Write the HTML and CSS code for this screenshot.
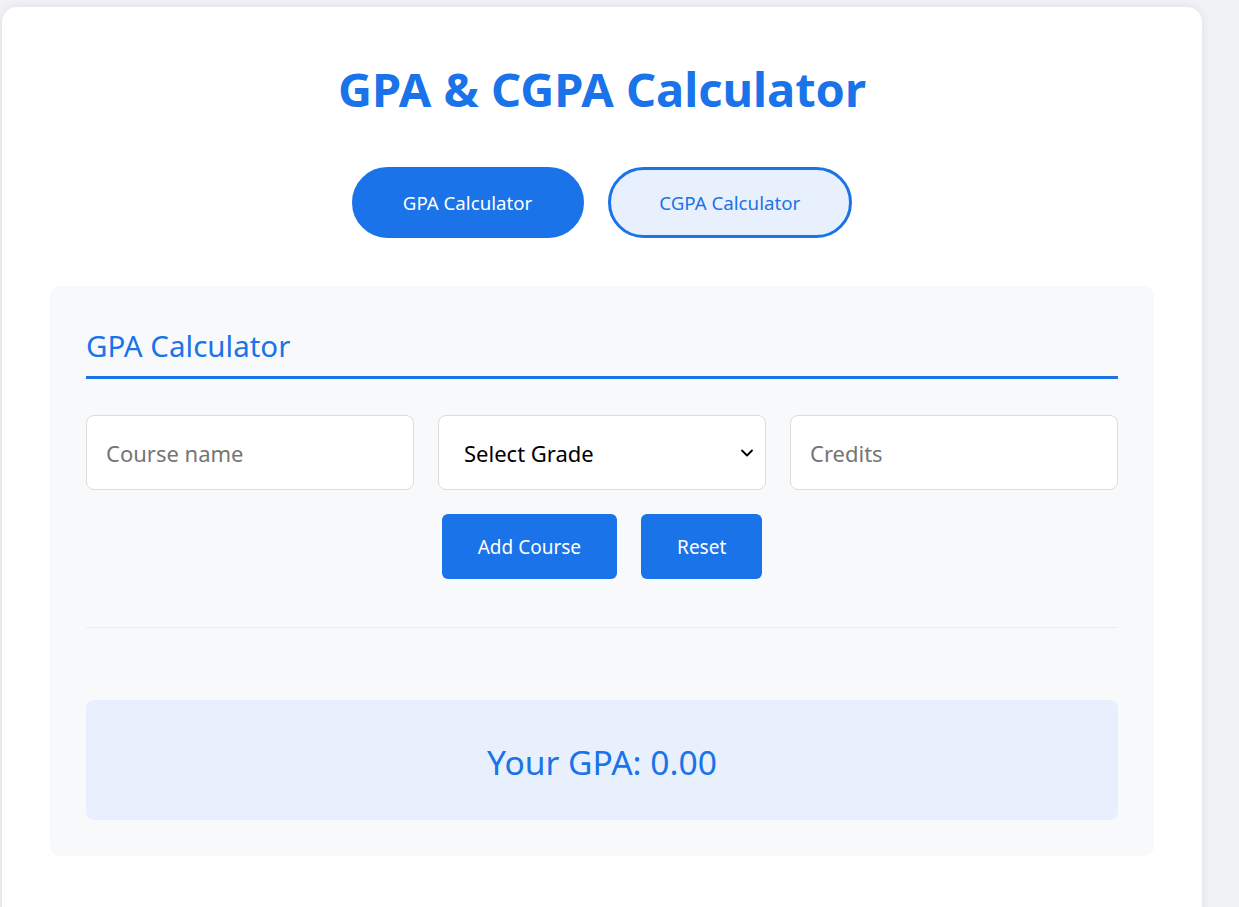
FILE: index.html
```html
<!DOCTYPE html>
<html lang="en">
<head>
<meta charset="utf-8">
<title>GPA &amp; CGPA Calculator</title>
<link rel="stylesheet" href="styles.css">
</head>
<body>
<div class="card">
  <h1 class="title">GPA &amp; CGPA Calculator</h1>
  <div class="tabs">
    <button class="tab active">GPA Calculator</button>
    <button class="tab">CGPA Calculator</button>
  </div>
  <section class="panel">
    <h2 class="panel-title">GPA Calculator</h2>
    <div class="fields">
      <input class="field" type="text" placeholder="Course name">
      <div class="select-wrap">
        <select class="field select">
          <option>Select Grade</option>
        </select>
        <svg class="chevron" width="14" height="10" viewBox="0 0 14 10"><path d="M2 2.5 L7 7.5 L12 2.5" fill="none" stroke="#000" stroke-width="1.8" stroke-linecap="round" stroke-linejoin="round"/></svg>
      </div>
      <input class="field" type="text" placeholder="Credits">
    </div>
    <div class="actions">
      <button class="btn">Add Course</button>
      <button class="btn">Reset</button>
    </div>
    <hr class="divider">
    <div class="result">Your GPA: 0.00</div>
  </section>
</div>
</body>
</html>
```

FILE: styles.css
```css
* { box-sizing: border-box; }
html, body { margin: 0; }
body {
  background: #f0f2f5;
  font-family: "Noto Sans", "Open Sans", sans-serif;
  padding: 7px 37px 0 2px;
  min-height: 907px;
}
.card {
  width: 1200px;
  background: #fff;
  border-radius: 15px;
  box-shadow: 0 0 10px rgba(0, 0, 0, 0.08);
  padding: 58px 48px 60px;
  min-height: 960px;
}
.title {
  margin: 0;
  text-align: center;
  color: #1a73e8;
  font-size: 47px;
  line-height: 48px;
  font-weight: 700;
}
.tabs {
  display: flex;
  justify-content: center;
  gap: 24px;
  margin-top: 54px;
}
.tab {
  font-family: inherit;
  font-size: 18.7px;
  line-height: 25px;
  padding: 20px 49px 20px 48px;
  border: 3px solid #1a73e8;
  border-radius: 40px;
  background: #e8f0fe;
  color: #1a73e8;
}
.tab.active {
  background: #1a73e8;
  color: #fff;
}
.panel {
  margin-top: 48px;
  background: #f8f9fa;
  border-radius: 10px;
  padding: 39px 36px 36px;
}
.panel-title {
  margin: 0;
  font-weight: 400;
  color: #1a73e8;
  font-size: 29.5px;
  line-height: 41px;
  padding-bottom: 10px;
  border-bottom: 3px solid #1a73e8;
}
.fields {
  display: grid;
  grid-template-columns: repeat(3, 1fr);
  gap: 24px;
  margin-top: 36px;
}
.field {
  width: 100%;
  height: 75px;
  border: 1px solid #ddd;
  border-radius: 8px;
  background: #fff;
  font-family: inherit;
  font-size: 22px;
  padding: 0 19px;
  color: #000;
  outline: none;
}
.field::placeholder { color: #757575; }
.select-wrap { position: relative; }
.select {
  appearance: none;
  -webkit-appearance: none;
  padding-left: 25px;
}
.chevron {
  position: absolute;
  right: 12px;
  top: 33px;
  pointer-events: none;
}
.actions {
  display: flex;
  justify-content: center;
  gap: 24px;
  margin-top: 24px;
}
.btn {
  font-family: inherit;
  font-size: 19px;
  height: 65px;
  padding: 0 36px;
  border: none;
  border-radius: 6px;
  background: #1a73e8;
  color: #fff;
}
.divider {
  border: none;
  border-top: 1px solid #e9ecef;
  margin: 48px 0 0;
}
.result {
  margin-top: 72px;
  background: #e8f0fe;
  border-radius: 8px;
  height: 120px;
  display: flex;
  align-items: center;
  justify-content: center;
  color: #1a73e8;
  font-size: 33.6px;
  padding-top: 3px;
}
```
